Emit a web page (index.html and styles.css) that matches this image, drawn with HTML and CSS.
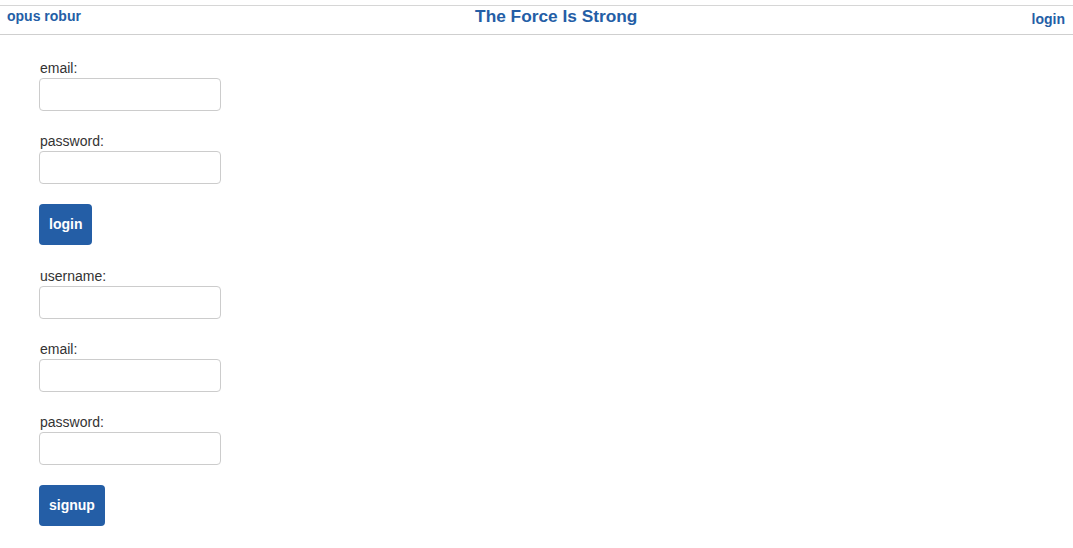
FILE: index.html
```html
<!DOCTYPE html>
<html lang="en">
<head>
<meta charset="utf-8">
<title>The Force Is Strong</title>
<link rel="stylesheet" href="styles.css">
</head>
<body>
<header class="topbar">
  <a class="brand" href="#">opus robur</a>
  <h1 class="title">The Force Is Strong</h1>
  <a class="nav-login" href="#">login</a>
</header>
<main class="content">
  <form class="form">
    <div class="field">
      <label class="label" for="login-email">email:</label>
      <input class="input" id="login-email" type="email">
    </div>
    <div class="field">
      <label class="label" for="login-password">password:</label>
      <input class="input" id="login-password" type="password">
    </div>
    <button class="btn" type="button">login</button>
  </form>
  <form class="form">
    <div class="field">
      <label class="label" for="su-username">username:</label>
      <input class="input" id="su-username" type="text">
    </div>
    <div class="field">
      <label class="label" for="su-email">email:</label>
      <input class="input" id="su-email" type="email">
    </div>
    <div class="field">
      <label class="label" for="su-password">password:</label>
      <input class="input" id="su-password" type="password">
    </div>
    <button class="btn" type="button">signup</button>
  </form>
</main>
</body>
</html>
```

FILE: styles.css
```css
html, body {
  margin: 0;
  padding: 0;
  background: #ffffff;
}

body {
  font-family: "Liberation Sans", Arial, sans-serif;
  font-size: 14px;
  color: #333333;
}

.topbar {
  margin-top: 5px;
  height: 28px;
  border-top: 1px solid #d6d6d6;
  border-bottom: 1px solid #cfcfcf;
  display: flex;
  justify-content: space-between;
  align-items: flex-start;
  padding: 0 8px 0 7px;
}

.brand,
.nav-login {
  font-size: 14px;
  font-weight: bold;
  color: #245ea6;
  text-decoration: none;
  line-height: 16px;
}

.brand {
  padding-top: 2px;
}

.nav-login {
  padding-top: 5px;
}

.title {
  margin: 0;
  font-size: 17.3px;
  font-weight: bold;
  color: #245ea6;
  line-height: 20px;
}

.content {
  padding: 24px 0 0 39px;
}

.form {
  display: flex;
  flex-direction: column;
  align-items: flex-start;
}

.form + .form {
  margin-top: 22px;
}

.field {
  display: flex;
  flex-direction: column;
}

.field + .field {
  margin-top: 21px;
}

.label {
  display: block;
  line-height: 19px;
  padding-left: 1px;
  color: #333333;
}

.input {
  box-sizing: border-box;
  width: 182px;
  height: 33px;
  margin: 0;
  border: 1px solid #cccccc;
  border-radius: 4px;
  background: #ffffff;
  font-family: inherit;
  font-size: 14px;
  padding: 4px 8px;
}

.btn {
  margin-top: 20px;
  box-sizing: border-box;
  height: 41px;
  padding: 0 10px;
  border: none;
  border-radius: 4px;
  background: #245ea6;
  color: #ffffff;
  font-family: inherit;
  font-size: 14px;
  font-weight: bold;
  line-height: 41px;
  cursor: pointer;
}
```
